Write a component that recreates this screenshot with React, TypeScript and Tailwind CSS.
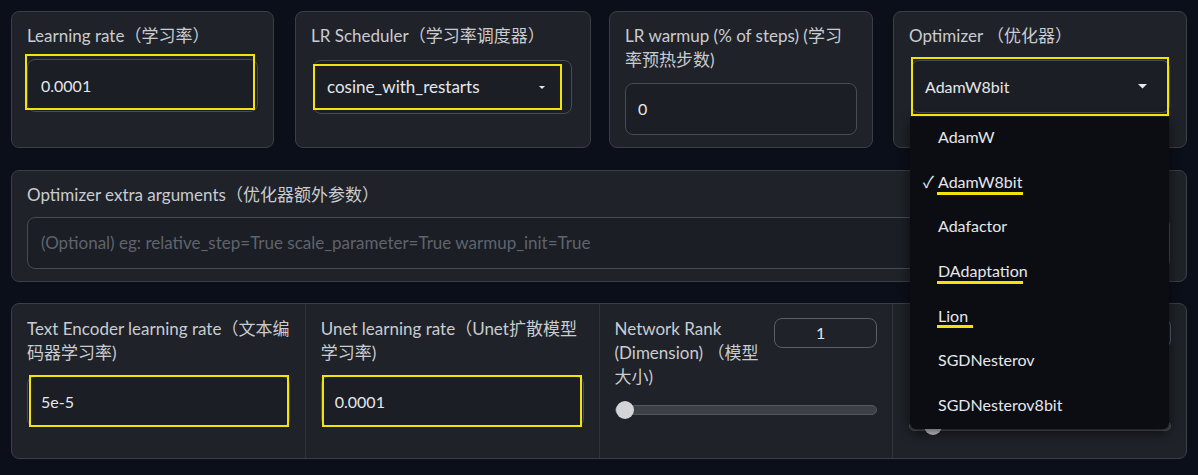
import React from 'react';

const panel = 'rounded-lg border border-[#3a3e46] bg-[#1f2228]';
const box = 'rounded-lg border border-[#474b53] bg-[#1b1e24] flex items-center';
const field = `${box} text-[#e5e7eb] text-[16px]`;
const label = 'text-[17px] leading-[24px] text-[#c9ccd1] whitespace-nowrap';

function Caret({ size = 8 }: { size?: number }) {
  return (
    <svg width={size} height={size / 2} viewBox="0 0 8 4" className="fill-[#e5e7eb]">
      <polygon points="0,0 8,0 4,4" />
    </svg>
  );
}

function Slider({ thumbLeft }: { thumbLeft: number }) {
  return (
    <div className="relative h-[18px] flex items-center">
      <div className="w-full h-[10px] rounded-full bg-[#3d4047] border border-[#55595f]" />
      <div className="absolute top-0 w-[18px] h-[18px] rounded-full bg-[#d3d5d9]" style={{ left: thumbLeft }} />
    </div>
  );
}

const options = [
  { name: 'AdamW' },
  { name: 'AdamW8bit', checked: true, mark: 86 },
  { name: 'Adafactor' },
  { name: 'DAdaptation', mark: 86 },
  { name: 'Lion', mark: 36 },
  { name: 'SGDNesterov' },
  { name: 'SGDNesterov8bit' },
];

export default function App() {
  return (
    <div className="w-[1198px] h-[475px] bg-[#0b0f19] pl-[11px] pt-[11px] font-['Lato','Noto_Sans_CJK_SC',sans-serif] overflow-hidden">
      {/* row 1 */}
      <div className="flex h-[137px]">
        <div className={`${panel} w-[263px] px-[15px] pt-[12px]`}>
          <div className={label}>Learning rate（学习率）</div>
          <div className="relative mt-[11px]">
            <div className={`${field} h-[53px] px-[13px]`}>0.0001</div>
            <div className="absolute left-[-2px] top-[-5px] w-[230px] h-[56px] border-2 border-[#f3e30c]" />
          </div>
        </div>

        <div className={`${panel} w-[296px] ml-[21px] pl-[15px] pr-[18px] pt-[12px]`}>
          <div className={label}>LR Scheduler（学习率调度器）</div>
          <div className="relative mt-[12px] ml-[2px]">
            <div className={`${box} text-[#e5e7eb] text-[17px] h-[54px] pl-[13px] pr-[26px] justify-between`}>
              <span>cosine_with_restarts</span>
              <Caret size={6} />
            </div>
            <div className="absolute left-0 top-[4px] w-[249px] h-[46px] border-2 border-[#f3e30c]" />
          </div>
        </div>

        <div className={`${panel} w-[264px] ml-[18px] px-[15px] pt-[12px]`}>
          <div className={label}>
            LR warmup (% of steps) (学习
            <br />
            率预热步数)
          </div>
          <div className={`${field} h-[52px] mt-[11px] px-[12px]`}>0</div>
        </div>

        <div className={`${panel} w-[294px] ml-[20px] pl-[15px] pr-[16px] pt-[12px] relative z-10`}>
          <div className={label}>Optimizer （优化器）</div>
          <div className="relative mt-[12px] ml-[2px]">
            <div className={`${field} h-[53px] pl-[13px] pr-[22px] justify-between`}>
              <span>AdamW8bit</span>
              <Caret size={9} />
            </div>
            <div className="absolute left-0 top-[-3px] w-[258px] h-[59px] border-2 border-[#f3e30c] z-20" />
          </div>
          {/* open dropdown */}
          <div className="absolute left-[16px] top-[105px] w-[259px] h-[312px] bg-[#0b0d13] rounded-b-md shadow-[0_4px_12px_rgba(0,0,0,0.6)]">
            <div className="-mt-[2px]">
              {options.map((o) => (
                <div key={o.name} className="relative h-[44.6px] flex items-center text-[16px] text-[#e5e7eb]">
                  <span className="w-[28px] text-right pr-[4px]">{o.checked ? '✓' : ''}</span>
                  <span>{o.name}</span>
                  {o.mark && (
                    <div className="absolute left-[27px] top-[32px] h-[3px] bg-[#f3e30c]" style={{ width: o.mark }} />
                  )}
                </div>
              ))}
            </div>
          </div>
        </div>
      </div>

      {/* row 2 */}
      <div className={`${panel} w-[1176px] h-[112px] mt-[22px] pl-[15px] pr-[16px] pt-[12px]`}>
        <div className={label}>Optimizer extra arguments（优化器额外参数）</div>
        <div className={`${box} h-[52px] mt-[10px] px-[13px] text-[17px] text-[#5f646d]`}>
          (Optional) eg: relative_step=True scale_parameter=True warmup_init=True
        </div>
      </div>

      {/* row 3 */}
      <div className={`${panel} w-[1176px] h-[156px] mt-[21px] flex`}>
        <div className="w-[294px] border-r border-[#2e3239] px-[15px] pt-[13px]">
          <div className={`${label} text-[16.5px]`}>
            Text Encoder learning rate（文本编
            <br />
            码器学习率)
          </div>
          <div className="relative mt-[11px]">
            <div className={`${field} h-[51px] px-[13px]`}>5e-5</div>
            <div className="absolute left-[2px] top-[-1px] w-[260px] h-[52px] border-2 border-[#f3e30c]" />
          </div>
        </div>

        <div className="w-[294px] border-r border-[#2e3239] px-[15px] pt-[13px]">
          <div className={label}>
            Unet learning rate（Unet扩散模型
            <br />
            学习率)
          </div>
          <div className="relative mt-[11px]">
            <div className={`${field} h-[51px] px-[13px]`}>0.0001</div>
            <div className="absolute left-[1px] top-[-1px] w-[260px] h-[52px] border-2 border-[#f3e30c]" />
          </div>
        </div>

        <div className="w-[294px] border-r border-[#2e3239] px-[15px] pt-[13px]">
          <div className="flex justify-between items-start">
            <div className={label}>
              Network Rank
              <br />
              (Dimension) （模型
              <br />
              大小)
            </div>
            <div className="mt-[1px] w-[103px] h-[30px] rounded-lg border border-[#5a5e66] flex items-center justify-center pr-[10px] text-[16px] text-[#e5e7eb]">
              1
            </div>
          </div>
          <div className="mt-[12px]">
            <Slider thumbLeft={1} />
          </div>
        </div>

        <div className="w-[293px] pl-[18px] pr-[15px] pt-[13px]">
          <div className="flex justify-between items-start">
            <div className={label}>
              Network Alpha
              <br />
              (Alpha for LoRA
              <br />
              weight scaling)
              <br />
              （网络Alpha）
            </div>
            <div className="mt-[1px] w-[103px] h-[30px] rounded-lg border border-[#5a5e66] flex items-center justify-center pr-[10px] text-[16px] text-[#e5e7eb]">
              1
            </div>
          </div>
          <div className="mt-[4px] -ml-[2px]">
            <Slider thumbLeft={15} />
          </div>
        </div>
      </div>
    </div>
  );
}
